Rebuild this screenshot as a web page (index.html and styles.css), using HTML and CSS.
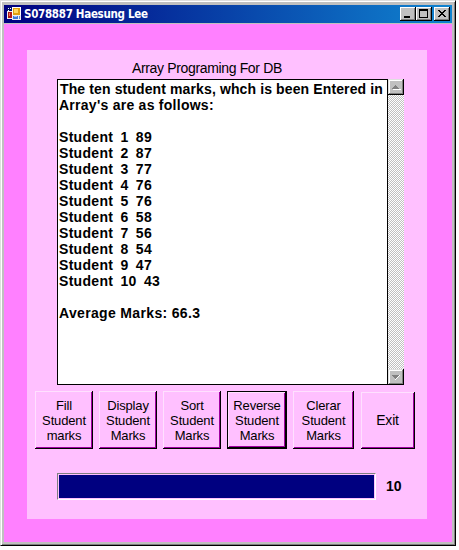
FILE: index.html
```html
<!DOCTYPE html>
<html lang="en">
<head>
<meta charset="utf-8">
<title>S078887 Haesung Lee</title>
<link rel="stylesheet" href="styles.css">
</head>
<body>
<div class="window">
  <header class="titlebar">
    <svg class="app-icon" width="16" height="16" viewBox="0 0 16 16" shape-rendering="crispEdges">
      <path fill="#fff" d="M0 0h6v5H0z"/>
      <path fill="#00106b" d="M0 0h5v4H0z"/>
      <path fill="#fff" d="M1 1h1v1H1zM3 1h1v1H3zM1 3h1v1H1z"/>
      <path fill="#eee" d="M0 4h6v8H0z"/>
      <path fill="#b01818" d="M1 5h4v6H1z"/>
      <path fill="#f07060" d="M2 6h1v3H2z"/>
      <path fill="#fff" d="M5 0h9v9H5z"/>
      <path fill="#e0a010" d="M6 1h7v7H6z"/>
      <path fill="#ffd860" d="M7 2h4v4H7z"/>
      <path fill="#eee" d="M5 8h9v5H5z"/>
      <path fill="#3e78d8" d="M6 9h5v3H6z"/>
      <path fill="#9cc0ff" d="M7 9h3v1H7z"/>
      <path fill="#5a88d0" d="M12 9h1v3h-1z"/>
    </svg>
    <span class="title">S078887 Haesung Lee</span>
    <div class="controls">
      <svg class="control" width="16" height="14" viewBox="0 0 16 14"><path d="M4 9h6v2H4z"/></svg>
      <svg class="control" width="16" height="14" viewBox="0 0 16 14"><path fill-rule="evenodd" d="M3 2h9v9H3zM4 4v6h7V4z"/></svg>
      <svg class="control close" width="16" height="14" viewBox="0 0 16 14"><path d="M4 3h2v1h1v1h2V4h1V3h2v1h-1v1h-1v1H9v1h1v1h1v1h1v1h-2V9H9V8H7v1H6v1H4V9h1V8h1V7h1V6H6V5H5V4H4z"/></svg>
    </div>
  </header>
  <main class="form">
    <section class="panel">
      <h1 class="heading">Array Programing For DB</h1>
      <div class="textbox">
        <div class="lines"><span class="intro">The ten student marks, whch is been Entered in</span>
<span class="intro-end">Array's are as follows:</span>

<span class="marks">Student  1  89
Student  2  87
Student  3  77
Student  4  76
Student  5  76
Student  6  58
Student  7  56
Student  8  54
Student  9  47
Student  10  43</span>

<span class="average">Average Marks: 66.3</span></div>
        <div class="scrollbar">
          <svg class="arrow" width="16" height="16" viewBox="0 0 16 16"><path fill="#fff" d="M5 10h8v1H5z"/><path fill="#808080" d="M7 6h1v1h1v1h1v1h1v1H4V9h1V8h1V7h1z"/></svg>
          <svg class="arrow" width="16" height="16" viewBox="0 0 16 16"><path fill="#fff" d="M11 6h1v1h-1v1h-1v1H9v1H8v1H7v-1h1V9h1V8h1V7h1z"/><path fill="#808080" d="M4 6h7v1h-1v1H9v1H8v1H7V9H6V8H5V7H4z"/></svg>
        </div>
      </div>
      <div class="buttons">
        <button class="btn">Fill<br>Student<br>marks</button>
        <button class="btn">Display<br>Student<br>Marks</button>
        <button class="btn">Sort<br>Student<br>Marks</button>
        <button class="btn default">Reverse<br>Student<br>Marks</button>
        <button class="btn clear">Clerar<br>Student<br>Marks</button>
        <button class="btn exit">Exit</button>
      </div>
      <div class="status">
        <div class="progress"><div class="bar"></div></div>
        <span class="count">10</span>
      </div>
    </section>
  </main>
</div>
</body>
</html>
```
FILE: styles.css
```css
* { box-sizing: border-box; }
body {
  margin: 0;
  background: #fff;
  color: #000;
  font-family: "Liberation Sans", Arial, sans-serif;
}
.window {
  width: 456px;
  height: 546px;
  padding: 2px;
  background: #c0c0c0;
  border: 1px solid;
  border-color: #dfdfdf #000 #000 #dfdfdf;
  box-shadow: inset 1px 1px #fff, inset -1px -1px #808080;
}
.titlebar {
  display: flex;
  align-items: center;
  height: 18px;
  margin: 2px 1px 1px;
  padding: 0 2px 0 3px;
  background: linear-gradient(90deg, #000080, #1084d0);
}
.app-icon { display: block; margin-top: 2px; }
.title {
  flex: 1;
  padding-left: 1px;
  color: #fff;
  font: bold 11.5px/18px "DejaVu Sans Condensed", "DejaVu Sans", sans-serif;
  font-stretch: condensed;
  letter-spacing: -0.3px;
  white-space: nowrap;
}
.controls { display: flex; }
.control {
  display: block;
  background: #c0c0c0;
  box-shadow: inset -1px -1px #000, inset 1px 1px #fff, inset -2px -2px #808080;
  shape-rendering: crispEdges;
}
.close { margin-left: 2px; }
.form {
  height: 518px;
  margin: 0 1px;
  padding: 26px 25px 0 23px;
  background: #ff80ff;
}
.panel {
  height: 469px;
  padding: 9px 12px 0 8px;
  background: #ffc0ff;
}
.heading {
  margin: 0 0 1px 97px;
  font-size: 14px;
  font-weight: normal;
  line-height: 19px;
  letter-spacing: -0.35px;
}
.textbox {
  display: flex;
  width: 347px;
  height: 306px;
  margin-left: 22px;
}
.lines {
  width: 331px;
  padding: 1px 0 0 1px;
  background: #fff;
  border: 1px solid #000;
  font-size: 14px;
  font-weight: bold;
  line-height: 16px;
  white-space: pre;
}
.intro { padding-left: 1px; letter-spacing: 0.12px; }
.intro-end { letter-spacing: 0.26px; }
.marks { letter-spacing: 0.3px; word-spacing: -0.55px; }
.average { letter-spacing: 0.34px; }
.scrollbar {
  display: flex;
  flex-direction: column;
  justify-content: space-between;
  width: 16px;
  background: repeating-conic-gradient(#fff 0 25%, #c0c0c0 0 50%) 0 0 / 2px 2px;
}
.arrow {
  display: block;
  background: #c0c0c0;
  box-shadow: inset -1px -1px #000, inset 1px 1px #dfdfdf, inset -2px -2px #808080, inset 2px 2px #fff;
  shape-rendering: crispEdges;
}
.buttons {
  display: flex;
  align-items: flex-end;
  gap: 6px;
  margin-top: 6px;
}
.btn {
  width: 58px;
  height: 58px;
  padding: 1px 0 0;
  border: 0;
  background: #ffc0ff;
  box-shadow: inset -1px -1px #000, inset 1px 1px #ffe0ff, inset -2px -2px #a000a0;
  color: #000;
  font: 13px/15px "Liberation Sans", Arial, sans-serif;
  letter-spacing: -0.15px;
}
.default {
  width: 60px;
  padding-top: 0;
  border: 1px solid #000;
}
.clear { width: 61px; }
.exit {
  width: 54px;
  height: 57px;
  margin-left: 1px;
  padding: 0 1px 1px 0;
  font-size: 14px;
}
.status {
  display: flex;
  align-items: center;
  margin: 24px 0 0 22px;
}
.progress {
  width: 319px;
  height: 27px;
  padding: 1px;
  border: 1px solid;
  border-color: #808080 #fff #fff #808080;
}
.bar { height: 23px; background: #000080; }
.count {
  margin: 0 0 2px 10px;
  font-size: 14px;
  font-weight: bold;
}
```
